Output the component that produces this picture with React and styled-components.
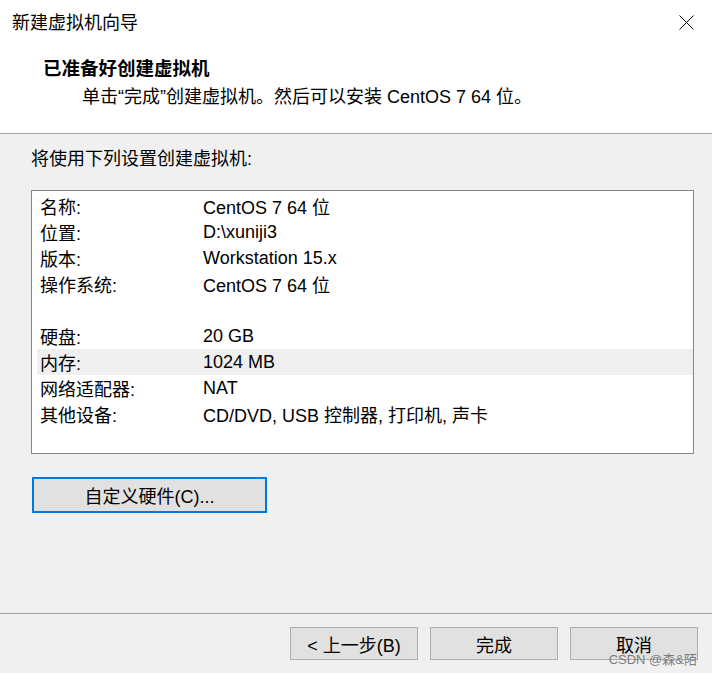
import React from "react";
import styled, { createGlobalStyle } from "styled-components";

const GlobalStyle = createGlobalStyle`
  html, body {
    margin: 0;
    padding: 0;
    background: #f0f0f0;
  }
  body {
    font-family: "Liberation Sans", "Noto Sans CJK SC", sans-serif;
    font-size: 18px;
    color: #000;
  }
`;

const Window = styled.div`
  position: relative;
  width: 712px;
  height: 673px;
  background: #f0f0f0;
  display: flex;
  flex-direction: column;
  overflow: hidden;
`;

const TitleBar = styled.div`
  height: 45px;
  background: #fff;
  display: flex;
  align-items: center;
  justify-content: space-between;
  padding: 0 18px 0 12px;
  flex-shrink: 0;
`;

const Title = styled.span`
  font-size: 18px;
  line-height: 22px;
`;

const CloseIcon = styled.svg`
  width: 15px;
  height: 15px;
  display: block;
`;

const Header = styled.div`
  height: 89px;
  background: #fff;
  border-bottom: 1px solid #a0a0a0;
  padding-top: 11px;
  box-sizing: border-box;
  flex-shrink: 0;
`;

const Heading = styled.div`
  font-weight: bold;
  font-size: 18.5px;
  line-height: 26px;
  padding-left: 43px;
`;

const Subtitle = styled.div`
  line-height: 26px;
  padding-left: 82px;
  margin-top: 2px;
`;

const Body = styled.div`
  flex: 1;
  padding: 12px 18px 0 31px;
  display: flex;
  flex-direction: column;
`;

const Intro = styled.div`
  line-height: 26px;
`;

const ListBox = styled.div`
  margin-top: 18px;
  height: 264px;
  box-sizing: border-box;
  border: 1px solid #828790;
  background: #fff;
  padding: 2px 0 0 5px;
`;

const Row = styled.div`
  display: flex;
  height: 26px;
  align-items: center;
  background: ${(p) => (p.$selected ? "#efefef" : "transparent")};
`;

const Name = styled.span`
  width: 166px;
  padding-left: 3px;
  box-sizing: border-box;
  flex-shrink: 0;
`;

const Value = styled.span`
  white-space: nowrap;
`;

const CustomButton = styled.button`
  margin-top: 23px;
  margin-left: 1px;
  width: 235px;
  height: 36px;
  box-sizing: border-box;
  border: 2px solid #0078d7;
  background: #e1e1e1;
  font: inherit;
  color: #000;
  padding: 0;
`;

const Footer = styled.div`
  height: 60px;
  box-sizing: border-box;
  border-top: 1px solid #a0a0a0;
  display: flex;
  justify-content: flex-end;
  gap: 12px;
  padding: 13px 14px 0 0;
  flex-shrink: 0;
`;

const FooterButton = styled.button`
  width: 128px;
  height: 33px;
  box-sizing: border-box;
  border: 1px solid #adadad;
  background: #e1e1e1;
  font: inherit;
  color: #000;
  padding: 0;
`;

const Watermark = styled.span`
  position: absolute;
  right: 15px;
  bottom: 6px;
  font-size: 13px;
  line-height: 14px;
  color: rgba(90, 90, 90, 0.75);
`;

const rows = [
  ["名称:", "CentOS 7 64 位"],
  ["位置:", "D:\\xuniji3"],
  ["版本:", "Workstation 15.x"],
  ["操作系统:", "CentOS 7 64 位"],
  ["", ""],
  ["硬盘:", "20 GB"],
  ["内存:", "1024 MB"],
  ["网络适配器:", "NAT"],
  ["其他设备:", "CD/DVD, USB 控制器, 打印机, 声卡"],
];

export default function App() {
  return (
    <>
      <GlobalStyle />
      <Window>
        <TitleBar>
          <Title>新建虚拟机向导</Title>
          <CloseIcon viewBox="0 0 15 15">
            <path d="M0.5 0.5 L14.5 14.5 M14.5 0.5 L0.5 14.5" stroke="#000" strokeWidth="1" fill="none" />
          </CloseIcon>
        </TitleBar>
        <Header>
          <Heading>已准备好创建虚拟机</Heading>
          <Subtitle>单击“完成”创建虚拟机。然后可以安装 CentOS 7 64 位。</Subtitle>
        </Header>
        <Body>
          <Intro>将使用下列设置创建虚拟机:</Intro>
          <ListBox>
            {rows.map(([name, value], i) => (
              <Row key={i} $selected={name === "内存:"}>
                <Name>{name}</Name>
                <Value>{value}</Value>
              </Row>
            ))}
          </ListBox>
          <div>
            <CustomButton>自定义硬件(C)...</CustomButton>
          </div>
        </Body>
        <Footer>
          <FooterButton>&lt; 上一步(B)</FooterButton>
          <FooterButton>完成</FooterButton>
          <FooterButton>取消</FooterButton>
        </Footer>
        <Watermark>CSDN @森&amp;陌</Watermark>
      </Window>
    </>
  );
}
